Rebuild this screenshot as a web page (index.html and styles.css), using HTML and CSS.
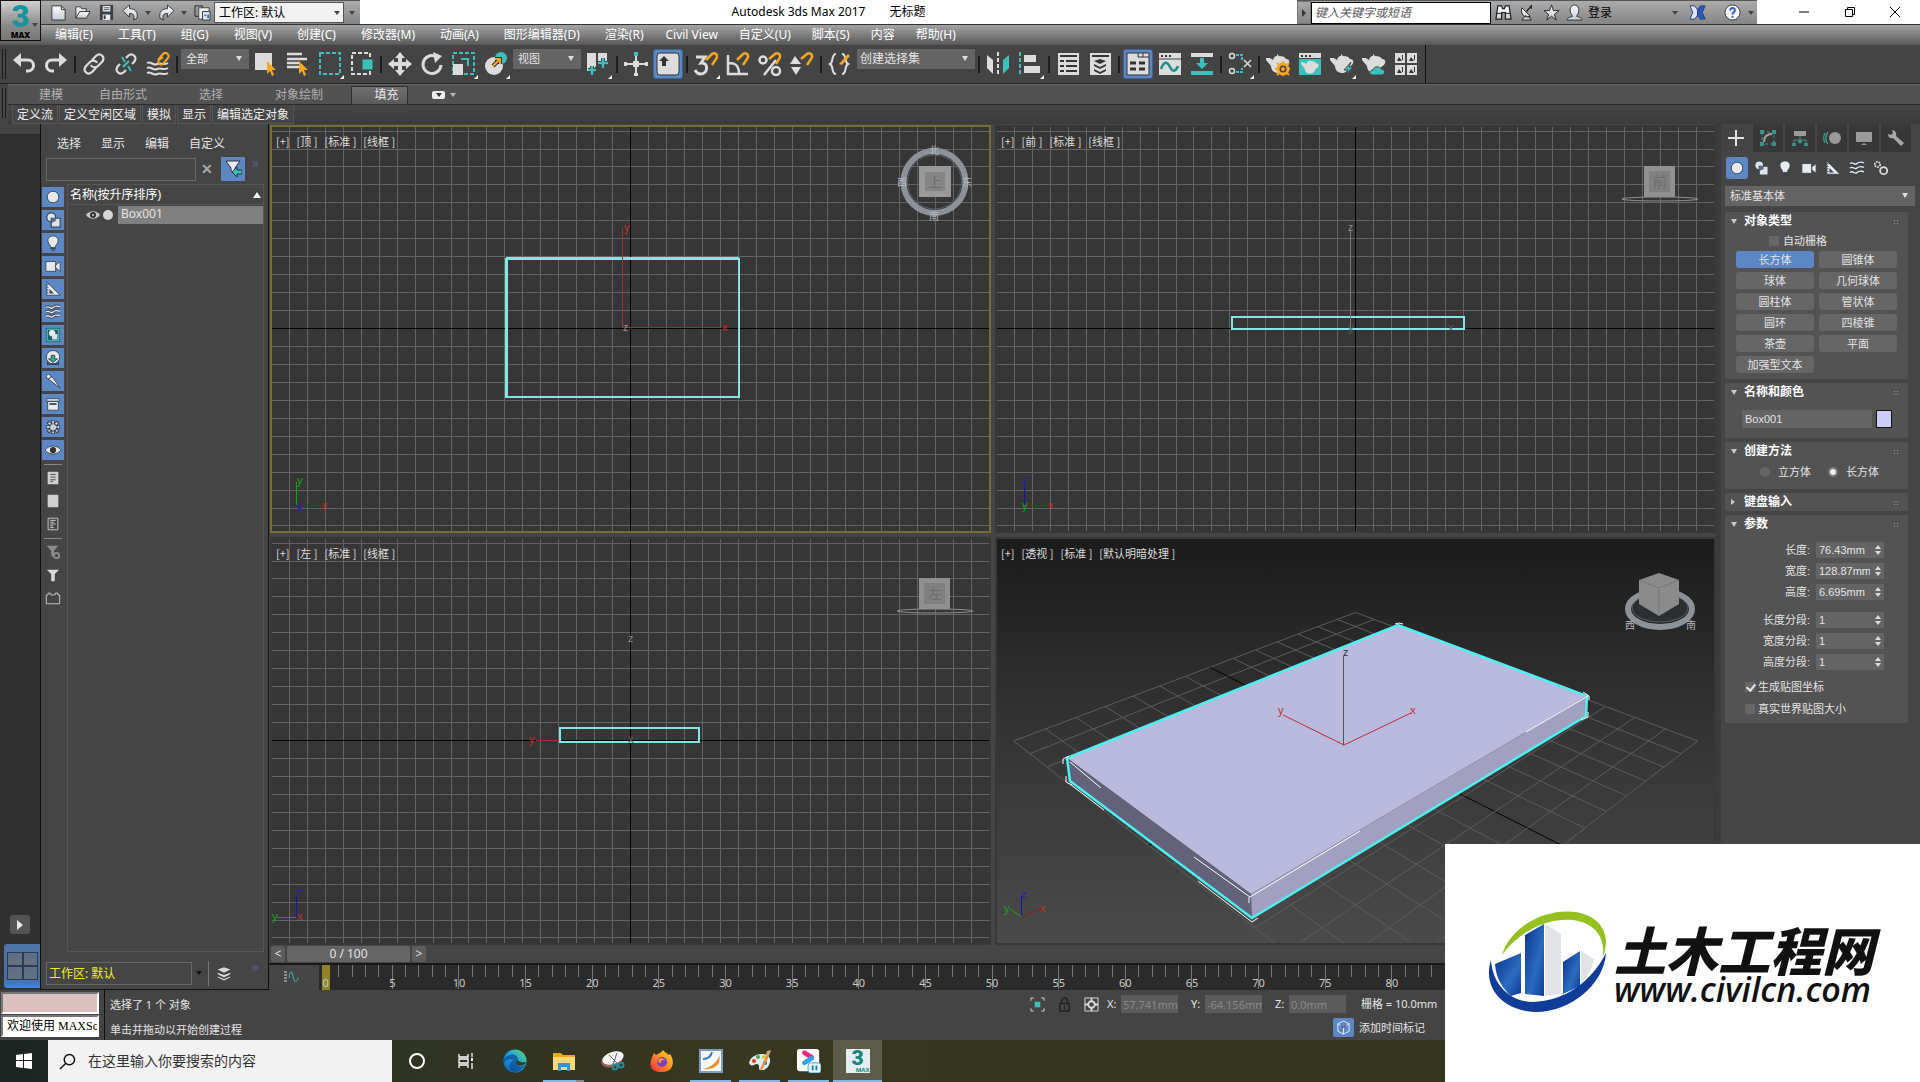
FILE: index.html
```
<!DOCTYPE html>
<html lang="zh-CN">
<head>
<meta charset="UTF-8">
<meta name="viewport" content="width=device-width, initial-scale=1.0">
<title>Autodesk 3ds Max 2017 无标题</title>
<link rel="stylesheet" href="styles.css">
</head>
<body>

<!-- icon sprite -->
<svg class="sprite" aria-hidden="true">
  <defs>
    <linearGradient id="metal" x1="0" y1="0" x2="0" y2="1"><stop offset="0" stop-color="#fff"/><stop offset="1" stop-color="#c4ccd6"/></linearGradient>
    <linearGradient id="vpbg" x1="0" y1="0" x2="0" y2="1"><stop offset="0" stop-color="#1b1b1b"/><stop offset=".5" stop-color="#353535"/><stop offset="1" stop-color="#4a4a4a"/></linearGradient>
    <linearGradient id="bar" x1="0" y1="0" x2="1" y2="1"><stop offset="0" stop-color="#0c318c"/><stop offset=".6" stop-color="#2b6cc0"/><stop offset="1" stop-color="#0f3a96"/></linearGradient>
    <linearGradient id="edge" x1="0" y1="1" x2="1" y2="0"><stop offset="0" stop-color="#0c59a4"/><stop offset=".5" stop-color="#1b9de2"/><stop offset="1" stop-color="#5fdd6a"/></linearGradient>
    <linearGradient id="fox" x1="1" y1="0" x2="0" y2="1"><stop offset="0" stop-color="#ffe23a"/><stop offset=".5" stop-color="#ff8a1f"/><stop offset="1" stop-color="#f5244a"/></linearGradient>
  </defs>

  <!-- quick access -->
  <symbol id="q-new" viewBox="0 0 18 18"><path d="M2 2h10l4 4v11H2z" fill="url(#metal)" stroke="#333"/><path d="M12 2v4h4" fill="none" stroke="#333"/></symbol>
  <symbol id="q-open" viewBox="0 0 18 18"><path d="M2 15V3h5l1 2h5v3" fill="url(#metal)" stroke="#333"/><path d="M2 15l4-7h11l-4 7z" fill="url(#metal)" stroke="#333"/></symbol>
  <symbol id="q-save" viewBox="0 0 18 18"><path d="M2 1h14v16H2z" fill="#3c4048"/><path d="M5 2h8v6H5zM5 11h8v6H5z" fill="#e8ecf0"/><path d="M6 4h6M6 6h6" stroke="#555"/><path d="M6 12h2v4H6z" fill="#333"/></symbol>
  <symbol id="q-undo" viewBox="0 0 18 18"><path d="M1 7l7-6v4c6 0 9 3 8 10l-4 2c2-5 0-7-4-7v4z" fill="url(#metal)" stroke="#333"/></symbol>
  <symbol id="q-redo" viewBox="0 0 18 18"><path d="M17 7l-7-6v4c-6 0-9 3-8 10l4 2c-2-5 0-7 4-7v4z" fill="url(#metal)" stroke="#333"/></symbol>
  <symbol id="q-proj" viewBox="0 0 18 18"><path d="M1 2h8v11H1z" fill="none" stroke="#222"/><path d="M5 4h11v12H5z" fill="#eee" stroke="#444"/><path d="M9 8h8v9H9z" fill="#dfe8f2" stroke="#333"/><path d="M11 11h2v2h-2zM14 11h2v4h-2z" fill="#3a6cc0"/></symbol>

  <!-- info center -->
  <symbol id="i-bino" viewBox="0 0 18 18"><path d="M3 2h4l1 3h2l1-3h4l2 14h-6V9H7v7H1z" fill="url(#metal)" stroke="#222" stroke-width="1.3"/><path d="M1 10h6M11 10h6" stroke="#222"/></symbol>
  <symbol id="i-dish" viewBox="0 0 18 18"><path d="M3 4l9 9c-6 3-11-3-9-9zM7 12l-4 5h10l-3-4" fill="url(#metal)" stroke="#222"/><path d="M8 8l5-6M13 1v4" stroke="#222" stroke-width="1.5"/></symbol>
  <symbol id="i-star" viewBox="0 0 18 18"><path d="M9 1l2 6h6l-5 4 2 6-5-4-5 4 2-6-5-4h6z" fill="url(#metal)" stroke="#222"/></symbol>
  <symbol id="i-user" viewBox="0 0 18 18"><path d="M1 17c0-3 4-3 6-4-5-6-2-12 2-12s7 6 2 12c2 1 6 1 6 4z" fill="url(#metal)" stroke="#333"/></symbol>
  <symbol id="i-x" viewBox="0 0 18 18"><path d="M1 2h5l3 4v6l-3 4H1l3-7z" fill="#dce6f8" stroke="#223c88"/><path d="M17 2h-5L9 6v6l3 4h5l-3-7z" fill="#2f57b8" stroke="#223c88"/></symbol>
  <symbol id="i-help" viewBox="0 0 18 18"><circle cx="9" cy="9" r="8" fill="#f4f6f8" stroke="#333"/><path d="M6.500 7c0-4 5.500-3.500 5 0-.3 2-2.500 2-2.500 4" fill="none" stroke="#2e5aa8" stroke-width="2"/><path d="M8 12.500h2v2H8z" fill="#2e5aa8"/></symbol>

  <!-- main toolbar -->
  <symbol id="t-undo" viewBox="0 0 24 24"><path d="M7 8h9a5 5 0 0 1 0 11h-2" fill="none" stroke="#dcdcdc" stroke-width="3"/><path d="M1 8l8-7v14z" fill="#dcdcdc"/></symbol>
  <symbol id="t-redo" viewBox="0 0 24 24"><path d="M17 8H8a5 5 0 0 0 0 11h2" fill="none" stroke="#dcdcdc" stroke-width="3"/><path d="M23 8l-8-7v14z" fill="#dcdcdc"/></symbol>
  <symbol id="t-link" viewBox="0 0 24 24"><g fill="none" stroke="#dcdcdc" stroke-width="2.200"><path d="M10 8l4-4c4-4 10 1 6 6l-4 4c-2 2-6 2-7-1"/><path d="M14 16l-4 4c-4 4-10-1-6-6l4-4c2-2 6-2 7 1"/></g></symbol>
  <symbol id="t-unlink" viewBox="0 0 24 24"><g fill="none" stroke="#dcdcdc" stroke-width="2.200"><path d="M12 6l2-2c4-4 10 1 6 6l-2 2"/><path d="M12 18l-2 2c-4 4-10-1-6-6l2-2"/></g><path d="M8 5l3 5M14 14l3 5M15 9l-6 6" stroke="#3cc0bd" stroke-width="2"/></symbol>
  <symbol id="t-bind" viewBox="0 0 24 24"><g fill="none" stroke="#dcdcdc" stroke-width="2"><path d="M1 11c4-2 6 3 10 1s6 2 11-1M1 16c4-2 6 3 10 1s6 2 11-1M1 21c4-2 6 3 10 1s6 2 11-1"/></g><path d="M12 8l5-6c3-3 7 1 5 4l-5 6c-3 2-6-1-4-4l4-3" fill="none" stroke="#f5a623" stroke-width="2"/></symbol>
  <symbol id="t-select" viewBox="0 0 24 24"><path d="M1 1h17v17H1z" fill="#dcdcdc"/><path d="M13 9l9 9h-4l2 5-2 1-2-5-3 3z" fill="#f5a623"/></symbol>
  <symbol id="t-byname" viewBox="0 0 24 24"><path d="M1 2h15M1 7h20M1 11h13M1 15h13" stroke="#dcdcdc" stroke-width="2.500"/><path d="M13 9l9 9h-4l2 5-2 1-2-5-3 3z" fill="#f5a623"/></symbol>
  <symbol id="t-rect" viewBox="0 0 24 24"><path d="M2 1h20v21H2z" fill="none" stroke="#3cc0bd" stroke-width="2" stroke-dasharray="4 2"/></symbol>
  <symbol id="t-cross" viewBox="0 0 24 24"><path d="M2 1h18v21H2z" fill="none" stroke="#dcdcdc" stroke-width="2" stroke-dasharray="4 2"/><path d="M12 7h11v11H12z" fill="#3cc0bd" stroke="#454545"/></symbol>
  <symbol id="t-move" viewBox="0 0 24 24"><path d="M12 0l5 6h-3v4h4V7l6 5-6 5v-3h-4v4h3l-5 6-5-6h3v-4H6v3l-6-5 6-5v3h4V6H7z" fill="#dcdcdc"/></symbol>
  <symbol id="t-rotate" viewBox="0 0 24 24"><path d="M15 4a9 9 0 1 0 6 9" fill="none" stroke="#dcdcdc" stroke-width="3"/><path d="M13 0l9 4-7 7z" fill="#dcdcdc"/></symbol>
  <symbol id="t-scale" viewBox="0 0 24 24"><path d="M1 1h21v21H1z" fill="none" stroke="#3cc0bd" stroke-width="2" stroke-dasharray="4 2"/><path d="M1 12h10v11H1z" fill="#dcdcdc"/><path d="M9 7h7v7" fill="none" stroke="#3cc0bd" stroke-width="2"/></symbol>
  <symbol id="t-place" viewBox="0 0 24 24"><circle cx="10" cy="14" r="9" fill="#dcdcdc"/><circle cx="17" cy="6" r="6" fill="#3cc0bd"/><path d="M9 14l7-7m-5 0h5v5" fill="none" stroke="#333" stroke-width="4"/><path d="M9 14l7-7m-5 0h5v5" fill="none" stroke="#f5a623" stroke-width="2"/></symbol>
  <symbol id="t-pivot" viewBox="0 0 24 24"><path d="M1 1h9v13l-4 5H1zM12 1h9v11h-9z" fill="#dcdcdc"/><path d="M6 14v9M2 18h8M17 6v10M12 11h10" stroke="#333" stroke-width="4"/><path d="M6 14v9M2 18h8M17 6v10M12 11h10" stroke="#3cc0bd" stroke-width="2.500"/></symbol>
  <symbol id="t-manip" viewBox="0 0 24 24"><path d="M12 4v19M1 12h22" stroke="#dcdcdc" stroke-width="2"/><path d="M9 9h6v6H9zM0 10h3v4H0zM21 10h3v4h-3zM10 21h4v3h-4z" fill="#dcdcdc"/><path d="M10 0h4v4h-4z" fill="#3cc0bd"/></symbol>
  <symbol id="t-key" viewBox="0 0 24 24"><rect x="1" y="1" width="22" height="22" rx="3" fill="#dcdcdc" stroke="#333"/><path d="M8 4l5 5h-3v5H6V9H3z" fill="#333"/></symbol>
  <symbol id="t-snap3" viewBox="0 0 24 24"><path d="M2 5h9l-4 6c8-1 7 11 0 11-3 0-5-2-6-4" fill="none" stroke="#dcdcdc" stroke-width="3"/><path d="M12 8l6-6c3-2 7 1 4 5l-4 6" fill="none" stroke="#f5a623" stroke-width="2.500"/></symbol>
  <symbol id="t-angle" viewBox="0 0 24 24"><path d="M2 3v19h20M3 11c8 0 10 4 10 11" fill="none" stroke="#dcdcdc" stroke-width="2.500"/><path d="M11 8l6-6c3-2 7 1 4 5l-4 6" fill="none" stroke="#f5a623" stroke-width="2.500"/></symbol>
  <symbol id="t-percent" viewBox="0 0 24 24"><circle cx="5" cy="8" r="3.500" fill="none" stroke="#dcdcdc" stroke-width="2.500"/><circle cx="18" cy="19" r="4" fill="none" stroke="#dcdcdc" stroke-width="2.500"/><path d="M18 8L6 23" stroke="#dcdcdc" stroke-width="2.500"/><path d="M11 7l6-5c3-2 7 1 4 5l-3 5" fill="none" stroke="#f5a623" stroke-width="2.500"/></symbol>
  <symbol id="t-spin" viewBox="0 0 24 24"><path d="M0 12l5-8 6 8zM1 15h10l-5 8z" fill="#dcdcdc"/><path d="M11 7l6-5c3-2 7 1 4 5l-4 6" fill="none" stroke="#f5a623" stroke-width="2.500"/></symbol>
  <symbol id="t-sets" viewBox="0 0 24 24"><path d="M8 2C3 2 6 10 2 12c4 2 1 10 6 10M14 2c5 0 2 8 6 10-4 2-1 10-6 10" fill="none" stroke="#dcdcdc" stroke-width="2"/><path d="M11 12L20 2l2 2-8 9z" fill="#f5a623"/></symbol>
  <symbol id="t-mirror" viewBox="0 0 24 24"><path d="M1 3l6 5v14l-6-6z" fill="#dcdcdc"/><path d="M23 3l-6 5v14l6-6z" fill="#3cc0bd"/><path d="M12 0v24" stroke="#dcdcdc" stroke-width="2" stroke-dasharray="4 2"/></symbol>
  <symbol id="t-align" viewBox="0 0 24 24"><path d="M2 0v24" stroke="#3cc0bd" stroke-width="2" stroke-dasharray="4 2"/><path d="M6 3h12v7H6zM6 14h16v7H6z" fill="#dcdcdc"/></symbol>
  <symbol id="t-table" viewBox="0 0 24 24"><path d="M2 1h21v22H2z" fill="#dcdcdc"/><path d="M4 4h17M4 9h4M10 9h11M4 14h4M10 14h11M4 19h4M10 19h11" stroke="#333" stroke-width="2"/></symbol>
  <symbol id="t-stack" viewBox="0 0 24 24"><path d="M2 1h21v22H2z" fill="#dcdcdc"/><path d="M4 4h17" stroke="#333" stroke-width="2"/><path d="M12 7l6 2-6 3-6-3zM6 12l6 3 6-3v2l-6 3-6-3zM6 17l6 3 6-3v2l-6 3-6-3z" fill="#333"/></symbol>
  <symbol id="t-ribbon" viewBox="0 0 24 24"><path d="M1 1h22v22H1z" fill="#dcdcdc" stroke="#333"/><path d="M12 1v4h11M17 1v4" fill="none" stroke="#333"/><path d="M4 11h6M13 11h6M4 17h6M13 17h6" stroke="#333" stroke-width="3"/></symbol>
  <symbol id="t-curve" viewBox="0 0 24 24"><path d="M1 1h22v22H1z" fill="#dcdcdc"/><path d="M3 3h2v2H3zM7 3h2v2H7zM11 3h2v2h-2z" fill="#333"/><path d="M0 7h24" stroke="#444"/><path d="M3 17c3-8 6-8 9-2s6 4 8-1" fill="none" stroke="#1c8f8d" stroke-width="2.500"/></symbol>
  <symbol id="t-schem" viewBox="0 0 24 24"><path d="M1 1h22v4H1z" fill="#dcdcdc"/><path d="M1 19h22v4H1zM10 6h4v5h4l-6 6-6-6h4z" fill="#3cc0bd"/></symbol>
  <symbol id="t-node" viewBox="0 0 24 24"><g fill="none" stroke="#dcdcdc" stroke-width="1.500"><circle cx="4" cy="4" r="2.500"/><circle cx="4" cy="19" r="2.500"/><path d="M16 8l7 7M23 8l-7 7"/></g><path d="M8 3h6v5M8 20h6v-4" fill="none" stroke="#3cc0bd" stroke-width="2" stroke-dasharray="3 1"/></symbol>
  <symbol id="teapot" viewBox="0 0 24 24"><path d="M11 2l2 2c4 0 6 1 7 3 5 0 4 6-1 8-1 4-4 6-7 6-5 0-7-4-7-7L0 8V6h4l3 2c1-3 2-4 4-4z" fill="#dcdcdc"/></symbol>
  <symbol id="t-rsetup" viewBox="0 0 24 24"><use href="#teapot"/><circle cx="17" cy="17" r="5" fill="#454545" stroke="#f5a623" stroke-width="3"/><path d="M17 9v3M17 22v2M9 17h3M22 17h2M11 11l2 2M21 21l2 2M11 23l2-2M21 13l2-2" stroke="#f5a623" stroke-width="2"/><circle cx="17" cy="17" r="2" fill="#f5a623"/></symbol>
  <symbol id="t-rframe" viewBox="0 0 24 24"><path d="M1 1h22v5H1z" fill="#dcdcdc"/><path d="M3 3h2v2H3zM7 3h2v2H7zM11 3h2v2h-2z" fill="#333"/><path d="M1 7h22v16H1z" fill="#3cc0bd"/><use href="#teapot" x="3" y="6" width="18" height="18"/></symbol>
  <symbol id="t-rprod" viewBox="0 0 24 24"><use href="#teapot"/><path d="M21 10l-7 8h4l-2 5 7-8h-4z" fill="#3cc0bd" stroke="#454545"/></symbol>
  <symbol id="t-rcloud" viewBox="0 0 24 24"><use href="#teapot"/><path d="M10 23c-4-1-2-5 1-5 1-4 7-4 8-1 4 0 5 5 1 6z" fill="#3cc0bd" stroke="#454545"/></symbol>
  <symbol id="t-gal" viewBox="0 0 24 24"><path d="M1 1h10v10H1zM13 1h10v10H13zM1 13h10v10H1zM13 13h10v10H13z" fill="#dcdcdc"/><path d="M3 9l2-4 3 4zM15 9l2-4 3 4zM3 21l2-4 3 4zM15 21l2-4 3 4zM8 3h1v5H8zM20 3h1v5h-1zM8 15h1v5H8zM20 15h1v5h-1z" fill="#333"/></symbol>

  <!-- object categories -->
  <symbol id="c-geo" viewBox="0 0 18 18"><circle cx="9" cy="9" r="6.500" fill="#e4e8ec" stroke="#3b4450"/></symbol>
  <symbol id="c-shape" viewBox="0 0 18 18"><circle cx="7" cy="6" r="5" fill="#dfe4ea" stroke="#3b4450" stroke-width="1.300"/><path d="M7 7h10v10H7z" fill="#dfe4ea" stroke="#3b4450" stroke-width="1.300"/><path d="M7 7h5v3l-4 2z" fill="#5a6a80"/></symbol>
  <symbol id="c-light" viewBox="0 0 18 18"><path d="M6 12C0 5 5 1 9 1s9 4 3 11v2H6z" fill="#e8ebee" stroke="#3b4450"/><path d="M6 15h6M7 17h4" stroke="#3b4450" stroke-width="1.500"/></symbol>
  <symbol id="c-cam" viewBox="0 0 18 18"><path d="M1 4h11v11H1z" fill="#e8ebee" stroke="#3b4450"/><path d="M12 8l5-4v11l-5-4z" fill="#e8ebee" stroke="#3b4450"/></symbol>
  <symbol id="c-help" viewBox="0 0 18 18"><path d="M2 1l15 15H2z" fill="#e8ebee" stroke="#3b4450"/><path d="M5 9l5 5H5z" fill="#3b4450"/><path d="M2 4h2M2 7h2M2 10h2M2 13h2" stroke="#3b4450"/></symbol>
  <symbol id="c-warp" viewBox="0 0 18 18"><path d="M1 4c4-3 5 3 8 0s5-1 8-1M1 9c4-3 5 3 8 0s5-1 8-1M1 14c4-3 5 3 8 0s5-1 8-1" fill="none" stroke="#3b4450" stroke-width="3.500"/><path d="M1 4c4-3 5 3 8 0s5-1 8-1M1 9c4-3 5 3 8 0s5-1 8-1M1 14c4-3 5 3 8 0s5-1 8-1" fill="none" stroke="#e4e8ec" stroke-width="1.500"/></symbol>
  <symbol id="c-group" viewBox="0 0 18 18"><path d="M1 1h16v16H1z" fill="#1f5f68"/><path d="M2.500 2.500h13v13h-13z" fill="none" stroke="#5fe0c8"/><circle cx="8" cy="7" r="3.500" fill="#e8ebee"/><path d="M8 8h6v6H8z" fill="#dce6ea"/></symbol>
  <symbol id="c-xref" viewBox="0 0 18 18"><circle cx="9" cy="8" r="7.500" fill="#e4e8ec" stroke="#3b4450"/><path d="M7 6h4v4h3l-5 4-5-4h3z" fill="#2fae8c" stroke="#2b4450"/><path d="M3 13v3h12v-3" fill="none" stroke="#2b4450" stroke-width="1.500"/></symbol>
  <symbol id="c-bone" viewBox="0 0 18 18"><circle cx="4" cy="4" r="2.500" fill="#e8ebee" stroke="#3b4450"/><path d="M4 7l4-3 9 13z" fill="#e8ebee" stroke="#3b4450"/></symbol>
  <symbol id="c-cont" viewBox="0 0 18 18"><path d="M2 3h14v3H2zM3 6h12v10H3z" fill="#e8ebee" stroke="#3b4450"/><path d="M5 9h8" stroke="#3b4450" stroke-width="2"/></symbol>
  <symbol id="c-frozen" viewBox="0 0 18 18"><path d="M9 1v16M1 9h16M3 3l12 12M15 3L3 15" stroke="#3b4450" stroke-width="4"/><path d="M9 2v14M2 9h14M4 4l10 10M14 4L4 14" stroke="#cfd6dd" stroke-width="2" stroke-dasharray="3 1"/></symbol>
  <symbol id="c-eye" viewBox="0 0 18 18"><path d="M0 9c5-6 13-6 18 0-5 6-13 6-18 0z" fill="#e4e8ec" stroke="#3b4450"/><circle cx="9" cy="9" r="3.500" fill="#333"/></symbol>
  <symbol id="e-all" viewBox="0 0 18 18"><path d="M3 2h12v14H3z" fill="#d0d0d0"/><path d="M6 5h6M6 8h6M6 11h6M6 13h3" stroke="#444"/></symbol>
  <symbol id="e-none" viewBox="0 0 18 18"><path d="M3 2h12v14H3z" fill="#d0d0d0"/></symbol>
  <symbol id="e-inv" viewBox="0 0 18 18"><path d="M3.500 2.500h11v13h-11z" fill="none" stroke="#d0d0d0"/><path d="M6 5h6M6 7h4M6 9h6M6 11h3M6 13h4" stroke="#d0d0d0"/></symbol>
  <symbol id="e-fgear" viewBox="0 0 18 18"><path d="M2 2h13l-5 6v7l-3-2V8z" fill="#8c8c8c"/><circle cx="13" cy="13" r="3" fill="none" stroke="#8c8c8c" stroke-width="2"/></symbol>
  <symbol id="e-filter" viewBox="0 0 18 18"><path d="M2 3h14l-5 5v8H7V8z" fill="#d8d8d8"/></symbol>
  <symbol id="e-lego" viewBox="0 0 18 18"><path d="M1.500 5.500h2v-2h3v2h5v-2h3v2h2v10h-15z" fill="none" stroke="#d0d0d0"/></symbol>
  <symbol id="e-find" viewBox="0 0 18 18"><path d="M2 1h14l-5 7v6l-4-3V8z" fill="#e8ebee" stroke="#333"/><path d="M18 10h-5V7l-5 5 5 5v-3h5z" fill="#3cc0bd" stroke="#234"/></symbol>
  <symbol id="e-layers" viewBox="0 0 18 18"><path d="M9 1l8 3-8 4-8-4zM1 8l8 3 8-3v2l-8 4-8-4zM1 13l8 3 8-3v1l-8 4-8-4z" fill="#d8d8d8"/></symbol>
  <symbol id="vis" viewBox="0 0 14 10"><path d="M0 5c4-5 10-5 14 0-4 5-10 5-14 0z" fill="#c8c8c8"/><circle cx="7" cy="5" r="3" fill="#333"/><circle cx="7" cy="5" r="1" fill="#ccc"/></symbol>

  <!-- command panel -->
  <symbol id="p-create" viewBox="0 0 18 18"><path d="M9 1v16M1 9h16" stroke="#e4e4e4" stroke-width="2"/></symbol>
  <symbol id="p-modify" viewBox="0 0 18 18"><path d="M3 3h12v12H3z" fill="none" stroke="#3f9186" stroke-dasharray="3 2"/><path d="M1 1h4v4H1zM13 1h4v4h-4zM1 13h4v4H1zM13 13h4v4h-4z" fill="#3f9186"/><path d="M5 13c0-5 3-8 8-8" fill="none" stroke="#a0a0a0" stroke-width="2"/></symbol>
  <symbol id="p-hier" viewBox="0 0 18 18"><path d="M3 2h12v5H3z" fill="#9a9a9a"/><path d="M9 7v4M3 15v-4h12v4" fill="none" stroke="#3f9186"/><path d="M1 14h4v3H1zM7 11h4v3H7zM13 14h4v3h-4z" fill="#3f9186"/></symbol>
  <symbol id="p-motion" viewBox="0 0 18 18"><circle cx="12" cy="9" r="6" fill="#9a9a9a"/><path d="M5 3c-3 4-3 8 0 12M2 4c-2 4-2 6 0 10" fill="none" stroke="#3f9186" stroke-width="1.500"/></symbol>
  <symbol id="p-disp" viewBox="0 0 18 18"><path d="M1 3h16v10H1zM6 16l3-2 3 2z" fill="#9a9a9a"/></symbol>
  <symbol id="p-util" viewBox="0 0 18 18"><path d="M5 1l1 3-2 2-3-1c0 4 3 5 5 4l8 8 3-3-8-7c1-3-1-6-4-6z" fill="#a8a8a8"/></symbol>
  <symbol id="p-sys" viewBox="0 0 18 18"><circle cx="5" cy="5" r="3" fill="none" stroke="#ddd" stroke-width="2" stroke-dasharray="2 1"/><circle cx="12" cy="12" r="4" fill="none" stroke="#ddd" stroke-width="2"/></symbol>

  <!-- status -->
  <symbol id="s-iso" viewBox="0 0 16 16"><path d="M1 4V1h3M12 1h3v3M15 12v3h-3M4 15H1v-3" fill="none" stroke="#ddd"/><path d="M5 5h6v6H5z" fill="#3cc0bd"/></symbol>
  <symbol id="s-lock" viewBox="0 0 16 16"><path d="M3 7h10v8H3zM5 7V4c0-4 6-4 6 0v3" fill="none" stroke="#222" stroke-width="1.500"/><path d="M8 9v4" stroke="#222"/></symbol>
  <symbol id="s-xform" viewBox="0 0 16 16"><path d="M1 1h14v14H1z" fill="none" stroke="#ddd"/><path d="M8 1v14M1 8h14" stroke="#ddd" stroke-width="2"/><circle cx="8" cy="8" r="3.500" fill="#444" stroke="#ddd" stroke-width="2"/></symbol>
  <symbol id="s-tag" viewBox="0 0 16 16"><path d="M8 1l6 3v8l-6 3-6-3V4zM2 4l6 4 6-4M8 8v7" fill="none" stroke="#e8eef6"/><path d="M5 6l3 2 3-2" stroke="#222" fill="none"/></symbol>
  <symbol id="s-curve" viewBox="0 0 16 16"><path d="M1 3h3M1 6h3M1 9h3M1 12h3" stroke="#ddd"/><path d="M6 9c1-8 3-8 4-2s3 8 5 2" fill="none" stroke="#3cc0bd"/></symbol>

  <!-- view navigation -->
  <symbol id="cube-face" viewBox="0 0 80 40"><ellipse cx="40" cy="36" rx="38" ry="2" fill="none" stroke="#8d8f91"/><path d="M24 3h31v31H24z" fill="#909090"/><path d="M29 8h21v21H29z" fill="#808080"/></symbol>

  <!-- taskbar -->
  <symbol id="w-start" viewBox="0 0 16 16"><path d="M0 2l7-1v6H0zM8 1l8-1v7H8zM0 8h7v7l-7-1zM8 8h8v8l-8-1z" fill="#fff"/></symbol>
  <symbol id="w-search" viewBox="0 0 18 18"><circle cx="11" cy="7" r="5.500" fill="none" stroke="#111" stroke-width="1.500"/><path d="M7 11l-6 6" stroke="#111" stroke-width="1.500"/></symbol>
  <symbol id="w-cortana" viewBox="0 0 24 24"><circle cx="12" cy="12" r="7" fill="none" stroke="#fff" stroke-width="2"/></symbol>
  <symbol id="w-view" viewBox="0 0 24 24"><path d="M5 5v3h9V5M5 19v-3h9v3M5 10h9v4H5zM18 4v4M18 14v6" fill="none" stroke="#fff" stroke-width="1.300"/><path d="M17 9h2v3h-2z" fill="#fff"/></symbol>
  <symbol id="w-edge" viewBox="0 0 24 24"><circle cx="12" cy="12" r="11.500" fill="url(#edge)"/><path d="M1 10C5 4 15 4 15 11c0 3-3 3-1 5 3 2 8 1 9-2-2 6-7 9-11 9-8 0-7-10-1-12-5-2-9 0-10 3z" fill="#0b4f95" fill-opacity=".75"/><path d="M14 10c1 1 0 3-1 4 0 3 6 3 9 1l1-2c-3 1-8 0-9-3z" fill="#37361f"/></symbol>
  <symbol id="w-folder" viewBox="0 0 24 24"><path d="M1 4h8l2 2h12v15H1z" fill="#e8a91d"/><path d="M1 8h22v13H1z" fill="#ffd873"/><path d="M6 14h12v8h-3v-4H9v4H6z" fill="#3391d4"/></symbol>
  <symbol id="w-snip" viewBox="0 0 24 24"><ellipse cx="11" cy="11" rx="11" ry="7" fill="#a05a5a" transform="rotate(-20 11 11)"/><ellipse cx="12" cy="9" rx="11" ry="6" fill="#f4f4f4" transform="rotate(-18 12 9)"/><path d="M8 6l10 10M16 4l-4 12" stroke="#667"/><circle cx="14" cy="18" r="2.500" fill="none" stroke="#2a8a9a" stroke-width="2"/><circle cx="20" cy="16" r="2.500" fill="none" stroke="#2a8a9a" stroke-width="2"/></symbol>
  <symbol id="w-fox" viewBox="0 0 24 24"><path d="M2 8l2-4 2 2c3-2 4-1 7-5 2 3 5 3 5 5l2-1c5 7 4 18-8 18S-1 16 2 8z" fill="url(#fox)"/><circle cx="12" cy="13" r="5" fill="#7542c8"/><path d="M8 11c2-3 6-2 7 1-2-2-4-1-4 1s-3 1-3-2z" fill="#ff9a24"/></symbol>
  <symbol id="w-xyz" viewBox="0 0 24 24"><path d="M0 0h24v24H0z" fill="#7f9cc8"/><path d="M2 2h20v20H2z" fill="#f8fafc"/><path d="M4 10c5 0 8-3 9-7" fill="none" stroke="#3777c2" stroke-width="2"/><path d="M3 20c9-1 15-7 18-14l-1 8c-4 5-9 7-17 6z" fill="#f08a1c"/></symbol>
  <symbol id="w-paint" viewBox="0 0 24 24"><path d="M1 14C3 4 20 2 22 10c1 7-5 12-9 11-4 0 0-5-4-6-3 0-5 4-8-1z" fill="#dbeaf5"/><circle cx="6" cy="12" r="2" fill="#d8402f"/><circle cx="10" cy="8" r="2" fill="#4aa84a"/><circle cx="16" cy="8" r="2" fill="#e8c52d"/><circle cx="17" cy="14" r="2" fill="#2c68c8"/><path d="M12 20l7-14 2 1-7 14z" fill="#e2902a"/><path d="M18 6l1-4 4-1-2 6z" fill="#c8a878"/></symbol>
  <symbol id="w-youku" viewBox="0 0 26 26"><rect width="24" height="24" rx="3" fill="#fff"/><path d="M8 4l8 5" stroke="#f0287a" stroke-width="5" stroke-linecap="round"/><path d="M16 10l-8 5" stroke="#2fa4f0" stroke-width="5" stroke-linecap="round"/><rect x="12" y="15" width="14" height="11" rx="3" fill="#e6f4fc" stroke="#39a0d8"/><path d="M17 18v5M21 18v5" stroke="#1f7eb8" stroke-width="2"/></symbol>
</svg>

<header class="titlebar">
  <div class="quickbar">
    <button class="qbtn"><svg><use href="#q-new"/></svg></button>
    <button class="qbtn"><svg><use href="#q-open"/></svg></button>
    <button class="qbtn"><svg><use href="#q-save"/></svg></button>
    <button class="qbtn"><svg><use href="#q-undo"/></svg></button>
    <i class="caret"></i>
    <button class="qbtn"><svg><use href="#q-redo"/></svg></button>
    <i class="caret"></i>
    <button class="qbtn"><svg><use href="#q-proj"/></svg></button>
    <span class="workspace"><select aria-label="工作区"><option>工作区: 默认</option></select><i class="caret"></i></span>
    <i class="caret overflow"></i>
  </div>
  <h1><span>Autodesk 3ds Max 2017</span><span>无标题</span></h1>
  <div class="infocenter">
    <button class="expand"></button>
    <input class="help-search" type="text" placeholder="键入关键字或短语" aria-label="搜索帮助">
    <button class="qbtn"><svg><use href="#i-bino"/></svg></button>
    <button class="qbtn"><svg><use href="#i-dish"/></svg></button>
    <button class="qbtn"><svg><use href="#i-star"/></svg></button>
    <button class="login"><svg><use href="#i-user"/></svg>登录<i class="caret"></i></button>
    <button class="qbtn exch"><svg><use href="#i-x"/></svg></button>
    <button class="qbtn help"><svg><use href="#i-help"/></svg></button>
    <i class="caret"></i>
  </div>
  <div class="winbtns">
    <button><svg viewBox="0 0 12 12"><path d="M1 6h10" stroke="#000"/></svg></button>
    <button><svg viewBox="0 0 12 12"><path d="M1.500 3.500h7v7h-7zM3.500 3V1.500h7v7H9" fill="none" stroke="#000"/></svg></button>
    <button><svg viewBox="0 0 12 12"><path d="M1 1l10 10M11 1L1 11" stroke="#000"/></svg></button>
  </div>
  <button class="appmenu"><b>3</b><small>MAX</small><i class="caret"></i></button>
</header>

<nav class="menubar">
  <div class="menus">
    <a href="#">编辑(E)</a><a href="#">工具(T)</a><a href="#">组(G)</a><a href="#">视图(V)</a><a href="#">创建(C)</a><a href="#">修改器(M)</a><a href="#">动画(A)</a><a href="#">图形编辑器(D)</a><a href="#">渲染(R)</a>
  </div>
  <div class="menus tight">
    <a href="#">Civil View</a><a href="#">自定义(U)</a><a href="#">脚本(S)</a><a href="#">内容</a><a href="#">帮助(H)</a>
  </div>
</nav>

<div class="toolbar">
  <div class="tools">
    <i class="grip"></i>
    <button><svg><use href="#t-undo"/></svg></button>
    <button><svg><use href="#t-redo"/></svg></button>
    <i class="sep"></i>
    <button><svg><use href="#t-link"/></svg></button>
    <button><svg><use href="#t-unlink"/></svg></button>
    <button><svg><use href="#t-bind"/></svg></button>
    <i class="sep"></i>
    <span class="drop"><select aria-label="选择过滤器"><option>全部</option></select></span>
    <button><svg><use href="#t-select"/></svg></button>
    <button><svg><use href="#t-byname"/></svg></button>
    <button class="fly"><svg><use href="#t-rect"/></svg></button>
    <button><svg><use href="#t-cross"/></svg></button>
    <i class="sep"></i>
    <button><svg><use href="#t-move"/></svg></button>
    <button><svg><use href="#t-rotate"/></svg></button>
    <button class="fly"><svg><use href="#t-scale"/></svg></button>
    <button class="fly"><svg><use href="#t-place"/></svg></button>
    <span class="drop"><select aria-label="参考坐标系"><option>视图</option></select></span>
    <button class="fly"><svg><use href="#t-pivot"/></svg></button>
    <i class="sep"></i>
    <button><svg><use href="#t-manip"/></svg></button>
    <button class="on"><svg><use href="#t-key"/></svg></button>
    <i class="sep"></i>
    <button class="fly"><svg><use href="#t-snap3"/></svg></button>
    <button><svg><use href="#t-angle"/></svg></button>
    <button><svg><use href="#t-percent"/></svg></button>
    <button><svg><use href="#t-spin"/></svg></button>
    <i class="sep"></i>
    <button><svg><use href="#t-sets"/></svg></button>
    <span class="drop wide"><select aria-label="选择集"><option>创建选择集</option></select></span>
    <i class="sep"></i>
    <button><svg><use href="#t-mirror"/></svg></button>
    <button class="fly"><svg><use href="#t-align"/></svg></button>
    <i class="sep"></i>
    <button><svg><use href="#t-table"/></svg></button>
    <button><svg><use href="#t-stack"/></svg></button>
    <i class="sep"></i>
    <button class="on"><svg><use href="#t-ribbon"/></svg></button>
    <button><svg><use href="#t-curve"/></svg></button>
    <button><svg><use href="#t-schem"/></svg></button>
    <i class="sep"></i>
    <button class="fly"><svg><use href="#t-node"/></svg></button>
    <i class="sep"></i>
    <button><svg><use href="#t-rsetup"/></svg></button>
    <button><svg><use href="#t-rframe"/></svg></button>
    <button class="fly"><svg><use href="#t-rprod"/></svg></button>
    <button><svg><use href="#t-rcloud"/></svg></button>
    <button><svg><use href="#t-gal"/></svg></button>
  </div>
</div>

<div class="ribbon">
  <i class="grip"></i>
  <div class="ribbon-body">
    <div class="tabs">
      <button class="model">建模</button><button>自由形式</button><button class="select">选择</button><button>对象绘制</button><button class="active">填充</button>
      <i class="ribbon-toggle"></i><i class="caret"></i>
    </div>
    <div class="panels">
      <button>定义流</button><button>定义空闲区域</button><button>模拟</button><button>显示</button><button>编辑选定对象</button>
    </div>
  </div>
</div>

<main class="workspace-area">
  <aside class="layout-strip">
    <button class="play"></button>
    <button class="layout"><i></i><i></i><i></i><i></i></button>
  </aside>

  <section class="explorer">
    <nav class="ex-menu"><a href="#">选择</a><a href="#">显示</a><a href="#">编辑</a><a href="#">自定义</a></nav>
    <div class="ex-search">
      <input type="text" aria-label="查找">
      <button class="clear">✕</button>
      <button class="find"><svg><use href="#e-find"/></svg></button>
      <span class="more">»</span>
    </div>
    <div class="ex-body">
      <div class="ex-filters">
        <button class="on"><svg><use href="#c-geo"/></svg></button>
        <button class="on"><svg><use href="#c-shape"/></svg></button>
        <button class="on"><svg><use href="#c-light"/></svg></button>
        <button class="on"><svg><use href="#c-cam"/></svg></button>
        <button class="on"><svg><use href="#c-help"/></svg></button>
        <button class="on"><svg><use href="#c-warp"/></svg></button>
        <button class="on"><svg><use href="#c-group"/></svg></button>
        <button class="on"><svg><use href="#c-xref"/></svg></button>
        <button class="on"><svg><use href="#c-bone"/></svg></button>
        <button class="on"><svg><use href="#c-cont"/></svg></button>
        <button class="on"><svg><use href="#c-frozen"/></svg></button>
        <button class="on"><svg><use href="#c-eye"/></svg></button>
        <hr>
        <button><svg><use href="#e-all"/></svg></button>
        <button><svg><use href="#e-none"/></svg></button>
        <button><svg><use href="#e-inv"/></svg></button>
        <hr>
        <button><svg><use href="#e-fgear"/></svg></button>
        <button><svg><use href="#e-filter"/></svg></button>
        <button><svg><use href="#e-lego"/></svg></button>
      </div>
      <div class="ex-list">
        <div class="ex-head">名称(按升序排序)<i></i></div>
        <div class="ex-row"><svg class="eye"><use href="#vis"/></svg><i class="dot"></i><span>Box001</span></div>
      </div>
    </div>
    <div class="ex-foot">
      <input type="text" value="工作区: 默认" aria-label="工作区">
      <i class="caret"></i>
      <i class="line"></i>
      <svg class="layers"><use href="#e-layers"/></svg>
      <span class="more">»</span>
    </div>
  </section>

  <section class="center">
    <div class="viewports">
      <div class="viewport active">
        <svg viewBox="270 125 721 408" preserveAspectRatio="xMidYMid slice">
          <g class="grid" data-left="270" data-top="125" data-x="630" data-y="328"></g>
          <path class="red" d="M622.500 327V228M622.500 327.500H722"/>
          <path class="wire" d="M506 259H739V397H506z"/><path class="wire" d="M507 396V258H739"/>
          <path class="red" d="M622.500 262V228"/>
          <path class="green" d="M296.500 505V482"/><path class="darkred" d="M300 505.500H324"/>
          <g class="axis"><text x="624" y="231" class="r">y</text><text x="722" y="331" class="r">x</text><text x="623" y="331" class="k">z</text><text x="297" y="484" class="g">y</text><text x="297" y="509" class="b">z</text><text x="322" y="509" class="r">x</text></g>
          <circle cx="934.500" cy="182" r="31" class="ring"/><circle cx="934.500" cy="182" r="27" fill="none" stroke="#55616a"/>
          <path d="M919 166h32v31h-32z" fill="#999"/><path d="M925 172h20v19h-20z" fill="#858585"/>
          <g class="compass"><text x="929" y="154">北</text><text x="929" y="220">南</text><text x="897" y="186">西</text><text x="962" y="186">东</text><text x="928" y="187" class="face">上</text></g>
        </svg>
        <div class="vp-label"><span>[+]</span><span>[顶 ]</span><span>[标准 ]</span><span>[线框 ]</span></div>
      </div>

      <div class="viewport">
        <svg viewBox="995 125 721 408" preserveAspectRatio="xMidYMid slice">
          <g class="grid" data-left="995" data-top="125" data-x="1355" data-y="328"></g>
          <path class="wire" d="M1232 317H1464V329H1232z"/>
          <path class="gray" d="M1350.500 328V230"/>
          <path class="green" d="M1023 505.500h2"/><path class="blue" d="M1024.500 505V483"/><path class="darkred" d="M1027 505.500H1050"/>
          <g class="axis"><text x="1348" y="231" class="k">z</text><text x="1348" y="331" class="f">y</text><text x="1448" y="331" class="f">x</text><text x="1022" y="484" class="b">z</text><text x="1022" y="509" class="g">y</text><text x="1048" y="509" class="r">x</text></g>
          <use href="#cube-face" x="1620" y="163" width="80" height="40"/>
          <g class="compass"><text x="1653" y="187" class="face">前</text></g>
        </svg>
        <div class="vp-label"><span>[+]</span><span>[前 ]</span><span>[标准 ]</span><span>[线框 ]</span></div>
      </div>

      <div class="viewport">
        <svg viewBox="270 537 721 408" preserveAspectRatio="xMidYMid slice">
          <g class="grid" data-left="270" data-top="537" data-x="630" data-y="740"></g>
          <path class="red" d="M536 740.500H560"/>
          <path class="wire" d="M560 728H699V742H560z"/>
          <path class="blue" d="M296.500 917V895"/><path class="green" d="M277 917.500H296"/>
          <g class="axis"><text x="628" y="642" class="k">z</text><text x="529" y="743" class="r">y</text><text x="628" y="743" class="f">x</text><text x="297" y="896" class="b">z</text><text x="272" y="920" class="g">y</text><text x="297" y="920" class="r">x</text></g>
          <use href="#cube-face" x="895" y="575" width="80" height="40"/>
          <g class="compass"><text x="928" y="599" class="face">左</text></g>
        </svg>
        <div class="vp-label"><span>[+]</span><span>[左 ]</span><span>[标准 ]</span><span>[线框 ]</span></div>
      </div>

      <div class="viewport">
        <svg viewBox="995 537 721 408" preserveAspectRatio="xMidYMid slice">
          <rect x="995" y="537" width="721" height="408" fill="url(#vpbg)"/>
          <g id="perspGrid"></g>
          <path d="M1067 758L1398 625L1587 696L1251 894z" fill="#babadc"/>
          <path d="M1067 758L1251 894L1252 918L1070 781z" fill="#62627a"/>
          <path d="M1251 894L1587 696L1586 716L1252 918z" fill="#a1a1bf"/>
          <path d="M1067 758L1398 625L1587 696L1586 716L1252 918L1070 781z" fill="none" stroke="#4ef0f2" stroke-width="2.500"/>
          <path class="white" d="M1063 764v-5l6-3M1070 762L1101 788M1066 776v6l6 3M1070 784l34 26M1194 857l56 40l110-66M1249 897v6M1198 881l54 41l6-4M1395 624l4-1l4 1M1526 732l62-36M1583 692l6 4v4M1588 712v5l-7 3"/>
          <path d="M1343.500 745V656" stroke="#555"/>
          <path d="M1283 715l61 30l67-32" fill="none" stroke="#c02848"/>
          <path class="blue" d="M1021.500 917V896"/><path class="green" d="M1022 917l-12-8"/><path class="darkred" d="M1022 917l20-9"/>
          <g class="axis"><text x="1343" y="656" class="d">z</text><text x="1278" y="714" class="r">y</text><text x="1410" y="714" class="r">x</text><text x="1021" y="898" class="b">z</text><text x="1004" y="912" class="g">y</text><text x="1040" y="912" class="r">x</text></g>
          <ellipse cx="1660" cy="609" rx="32" ry="18" class="ring"/><ellipse cx="1660" cy="608" rx="28" ry="14" fill="#2c2f32" stroke="#55616a"/>
          <path d="M1639 580l20-7l20 7v24l-20 12l-20-12z" fill="#8b8b8b"/><path d="M1639 580l20 8l20-8M1659 588v28" fill="none" stroke="#777"/>
          <g class="compass"><text x="1625" y="629">西</text><text x="1686" y="629">南</text></g>
        </svg>
        <div class="vp-label"><span>[+]</span><span>[透视 ]</span><span>[标准 ]</span><span>[默认明暗处理 ]</span></div>
      </div>
    </div>
    <div class="timeslider"><button>&lt;</button><button class="thumb">0 / 100</button><button>&gt;</button></div>
    <div class="trackbar">
      <button class="mini-curve"><svg><use href="#s-curve"/></svg></button>
      <div class="track" id="track"></div>
    </div>
  </section>

  <aside class="command">
    <div class="cmd-tabs">
      <button class="active"><svg><use href="#p-create"/></svg></button>
      <button><svg><use href="#p-modify"/></svg></button>
      <button><svg><use href="#p-hier"/></svg></button>
      <button><svg><use href="#p-motion"/></svg></button>
      <button><svg><use href="#p-disp"/></svg></button>
      <button><svg><use href="#p-util"/></svg></button>
    </div>
    <div class="cmd-cats">
      <button class="on"><svg><use href="#c-geo"/></svg></button>
      <button><svg><use href="#c-shape"/></svg></button>
      <button><svg><use href="#c-light"/></svg></button>
      <button><svg><use href="#c-cam"/></svg></button>
      <button><svg><use href="#c-help"/></svg></button>
      <button><svg><use href="#c-warp"/></svg></button>
      <button><svg><use href="#p-sys"/></svg></button>
    </div>
    <span class="drop cmd-drop"><select aria-label="对象类别"><option>标准基本体</option></select></span>

    <div class="rollouts">
      <section class="rollout">
        <h2>对象类型</h2>
        <div class="autogrid"><input type="checkbox" id="autogrid"><label for="autogrid">自动栅格</label></div>
        <div class="types">
          <button class="on">长方体</button><button>圆锥体</button>
          <button>球体</button><button>几何球体</button>
          <button>圆柱体</button><button>管状体</button>
          <button>圆环</button><button>四棱锥</button>
          <button>茶壶</button><button>平面</button>
          <button>加强型文本</button>
        </div>
      </section>
      <section class="rollout">
        <h2>名称和颜色</h2>
        <div class="namecolor"><input type="text" value="Box001" aria-label="名称"><button class="swatch" aria-label="颜色"></button></div>
      </section>
      <section class="rollout">
        <h2>创建方法</h2>
        <div class="methods">
          <input type="radio" name="method" id="m-cube"><label for="m-cube">立方体</label>
          <input type="radio" name="method" id="m-box" checked><label for="m-box">长方体</label>
        </div>
      </section>
      <section class="rollout closed"><h2>键盘输入</h2></section>
      <section class="rollout params">
        <h2>参数</h2>
        <div class="field"><label for="len">长度:</label><span class="spin"><input type="text" id="len" value="76.43mm"></span></div>
        <div class="field"><label for="wid">宽度:</label><span class="spin"><input type="text" id="wid" value="128.87mm"></span></div>
        <div class="field"><label for="hei">高度:</label><span class="spin"><input type="text" id="hei" value="6.695mm"></span></div>
        <div class="field first"><label for="lseg">长度分段:</label><span class="spin"><input type="text" id="lseg" value="1"></span></div>
        <div class="field"><label for="wseg">宽度分段:</label><span class="spin"><input type="text" id="wseg" value="1"></span></div>
        <div class="field"><label for="hseg">高度分段:</label><span class="spin"><input type="text" id="hseg" value="1"></span></div>
        <div class="check"><input type="checkbox" id="mapc" checked><label for="mapc">生成贴图坐标</label></div>
        <div class="check"><input type="checkbox" id="realw"><label for="realw">真实世界贴图大小</label></div>
      </section>
    </div>
  </aside>
</main>

<footer class="status">
  <div class="listener"><div class="macro"></div><div class="script">欢迎使用 MAXScr</div></div>
  <div class="prompt"><p>选择了 1 个 对象</p><p>单击并拖动以开始创建过程</p></div>
  <div class="coords">
    <div class="coord-row">
      <button><svg><use href="#s-iso"/></svg></button>
      <button><svg><use href="#s-lock"/></svg></button>
      <button><svg><use href="#s-xform"/></svg></button>
      <label for="cx">X:</label><input type="text" id="cx" value="57.741mm" disabled>
      <label for="cy">Y:</label><input type="text" id="cy" value="-64.156mm" disabled>
      <label for="cz">Z:</label><input type="text" id="cz" value="0.0mm" disabled>
      <span>栅格 = 10.0mm</span>
    </div>
    <div class="tag-row"><button class="on"><svg><use href="#s-tag"/></svg></button><span>添加时间标记</span></div>
  </div>
</footer>

<div class="taskbar">
  <button class="start"><svg><use href="#w-start"/></svg></button>
  <label class="task-search"><svg><use href="#w-search"/></svg><input type="text" placeholder="在这里输入你要搜索的内容"></label>
  <button><svg><use href="#w-cortana"/></svg></button>
  <button><svg><use href="#w-view"/></svg></button>
  <button><svg><use href="#w-edge"/></svg></button>
  <button class="open multi"><svg><use href="#w-folder"/></svg></button>
  <button><svg><use href="#w-snip"/></svg></button>
  <button><svg><use href="#w-fox"/></svg></button>
  <button class="open"><svg><use href="#w-xyz"/></svg></button>
  <button class="open"><svg><use href="#w-paint"/></svg></button>
  <button class="open"><svg><use href="#w-youku"/></svg></button>
  <button class="open current"><span class="max-icon"><b>3</b><small>MAX</small></span></button>
</div>

<!-- site mark over the corner of the desktop -->
<div class="sitemark">
  <svg class="mark" viewBox="0 0 126 106">
    <path d="M14 47C22 20 55 0 88 4c24 4 36 22 27 45c2-20-8-34-30-37C58 9 30 25 14 47z" fill="#94c11f"/>
    <path d="M7 56l26-11v40l-10 3c-9-8-15-18-16-32z" fill="url(#bar)"/>
    <path d="M37 27l19-11v72l-19-2z" fill="url(#bar)"/><path d="M57 16l16 10v60l-16 2z" fill="#e1e3e6"/>
    <path d="M75 54l17-11v35l-17 8z" fill="url(#bar)"/><path d="M93 43l13 8c-2 10-7 18-13 25z" fill="#e1e3e6"/>
    <path d="M3 52C4 74 20 94 45 94c32-1 58-20 73-49c-2 32-36 59-70 59C15 103-6 80 3 52z" fill="#0f3d97"/>
  </svg>
  <div class="mark-text"><strong>土木工程网</strong><span>www.civilcn.com</span></div>
</div>

<script>
  const NS = 'http://www.w3.org/2000/svg';

  function line(parent, x1, y1, x2, y2, color) {
    let el = document.createElementNS(NS, 'line');
    el.setAttribute('x1', x1);
    el.setAttribute('y1', y1);
    el.setAttribute('x2', x2);
    el.setAttribute('y2', y2);
    el.setAttribute('stroke', color);
    parent.appendChild(el);
  }

  // flat grids of the orthographic views
  document.querySelectorAll('.grid').forEach(function(g) {
    const step = 17.95;
    let left = +g.dataset.left, top = +g.dataset.top;
    let ax = +g.dataset.x, ay = +g.dataset.y;
    for (let k = -20; k <= 20; k++) {
      let x = Math.round(ax + k * step) + 0.5;
      let y = Math.round(ay + k * step) + 0.5;
      if (k !== 0) {
        line(g, x, top, x, top + 408, '#646464');
        if (Math.abs(k) < 12) line(g, left, y, left + 721, y, '#646464');
      }
    }
    line(g, left, ay + 0.5, left + 721, ay + 0.5, '#000');
    line(g, ax + 0.5, top, ax + 0.5, top + 408, '#000');
  });

  // home grid of the perspective view
  function project(u, v) {
    let a = (u - v) / 2, b = (u + v) / 2, w = 1 - 0.346 * b;
    return [1355.5 + 342 * a / w, 741 + 173 * b / w];
  }
  let pg = document.getElementById('perspGrid');
  for (let i = -7; i <= 7; i++) {
    let t = i / 7, c = i === 0 ? '#000' : '#5c5c5c';
    line(pg, ...project(t, -1), ...project(t, 1), c);
    line(pg, ...project(-1, t), ...project(1, t), c);
  }

  // frames 0-100
  let track = document.getElementById('track');
  for (let f = 0; f <= 100; f++) {
    let cell = document.createElement('div');
    cell.className = f % 5 === 0 ? 'frame major' : 'frame';
    if (f === 0) cell.className += ' current';
    if (f % 5 === 0) cell.innerHTML = '<span>' + f + '</span>';
    track.appendChild(cell);
  }
</script>

</body>
</html>
```
FILE: styles.css
```
* {
  box-sizing: border-box;
}

body {
  margin: 0;
  height: 100vh;
  display: flex;
  flex-direction: column;
  overflow: hidden;
  background-color: #444;
  color: #e4e4e4;
  font-family: "Noto Sans", "Noto Sans CJK SC", sans-serif;
  font-size: 12px;
  line-height: 16px;
}

button, input, select {
  font: inherit;
  color: inherit;
  margin: 0;
  padding: 0;
  border: none;
  background: none;
  border-radius: 0;
}

select {
  appearance: none;
}

a {
  color: inherit;
  text-decoration: none;
  white-space: nowrap;
}

svg {
  display: block;
  flex: none;
}

.sprite {
  position: absolute;
  width: 0;
  height: 0;
}

.caret {
  flex: none;
  width: 0;
  height: 0;
  border: 3px solid transparent;
  border-top: 4px solid #444;
  border-bottom: none;
}

/* title bar */
.titlebar {
  position: relative;
  display: flex;
  flex: none;
  height: 24px;
  background-color: #fff;
  color: #000;
}

.quickbar,
.infocenter {
  display: flex;
  align-items: center;
  flex: none;
  background: linear-gradient(#ababab, #858585);
  border-top: 1px solid #555;
}

.quickbar {
  width: 360px;
  padding-left: 46px;
}

.qbtn {
  display: flex;
  flex: none;
  width: 24px;
  justify-content: center;
}

.quickbar .qbtn svg,
.infocenter svg {
  width: 17px;
  height: 17px;
}

.quickbar .caret {
  margin: 0 3px;
}

.workspace {
  display: flex;
  align-items: center;
  flex: 1;
  height: 21px;
  background-color: #f2f2f2;
  border: 1px solid #555;
}

.workspace select {
  flex: 1;
  padding-left: 4px;
}

.quickbar .overflow {
  margin: 0 5px;
}

.titlebar h1 {
  flex: 1;
  display: flex;
  justify-content: center;
  align-items: center;
  gap: 24px;
  margin: 0;
  font-size: 12px;
  font-weight: normal;
}

.infocenter {
  width: 460px;
}

.expand {
  width: 14px;
  height: 23px;
  border: 1px solid #777;
}

.expand::before {
  content: "";
  display: block;
  width: 0;
  margin-left: 4px;
  border: 4px solid transparent;
  border-left-color: #333;
  border-right: none;
}

.help-search {
  width: 180px;
  height: 22px;
  padding-left: 3px;
  background-color: #fff;
  border: 1px solid #000;
}

.help-search::placeholder {
  color: #555;
  font-style: italic;
}

.login {
  display: flex;
  align-items: center;
  width: 118px;
  padding-left: 3px;
  gap: 5px;
}

.login .caret {
  margin-left: auto;
  margin-right: 3px;
}

.exch {
  width: 32px;
}

.help {
  width: 32px;
  margin-left: 3px;
}

.winbtns {
  display: flex;
  width: 163px;
  padding: 0 2px 0 24px;
}

.winbtns button {
  display: flex;
  flex: 1;
  align-items: center;
  justify-content: center;
}

.winbtns svg {
  width: 12px;
  height: 12px;
}

.appmenu {
  position: absolute;
  left: 0;
  top: 0;
  z-index: 2;
  width: 41px;
  height: 41px;
  border: 1px solid #111;
  background: linear-gradient(#d0d0d0, #8c8c8c 60%, #777);
}

.appmenu b {
  display: block;
  height: 28px;
  font: 900 31px/29px Roboto, sans-serif;
  color: #12969c;
}

.appmenu small {
  display: block;
  font-size: 8px;
  line-height: 10px;
  font-weight: 900;
  color: #000;
}

.appmenu .caret {
  position: absolute;
  right: 2px;
  top: 22px;
}

/* menu bar */
.menubar {
  display: flex;
  flex: none;
  height: 21px;
  gap: 22px;
  padding-left: 55px;
  align-items: center;
  background: linear-gradient(#a4a4a4, #575757);
  border-top: 1px solid #333;
  color: #fff;
}

.menus {
  display: flex;
  gap: 25px;
}

.tight {
  gap: 21px;
}

/* main toolbar */
.toolbar {
  display: flex;
  flex: none;
  height: 39px;
  border-bottom: 1px solid #222;
}

.tools {
  display: flex;
  align-items: center;
  padding-right: 3px;
  border-right: 1px solid #111;
}

.grip {
  flex: none;
  width: 4px;
  height: 30px;
  margin: 0 2px;
  border: 1px solid #1c1c1c;
  border-width: 0 1px;
}

.tools button {
  position: relative;
  display: flex;
  width: 32px;
  height: 30px;
  align-items: center;
  justify-content: center;
}

.tools button svg {
  width: 24px;
  height: 24px;
}

.tools button.on::before {
  content: "";
  position: absolute;
  inset: 0 1px;
  z-index: -1;
  border-radius: 3px;
  background-color: #5b88c4;
  border: 1px solid #3e6294;
}

.fly::after {
  content: "";
  position: absolute;
  right: 2px;
  bottom: 0;
  border: 2px solid #fff;
  border-top-color: transparent;
  border-left-color: transparent;
}

.sep {
  flex: none;
  width: 2px;
  height: 17px;
  margin: 0 2px;
  background-color: #1c1c1c;
}

.drop {
  position: relative;
  display: block;
  width: 68px;
  height: 20px;
  margin: 0 1px;
  background-color: #646464;
}

.tools .drop {
  margin-bottom: 10px;
}

.tools .wide {
  width: 118px;
}

.drop select {
  width: 100%;
  height: 100%;
  padding-left: 5px;
}

.wide select {
  padding-left: 3px;
}

.drop::after {
  content: "";
  position: absolute;
  right: 7px;
  top: 7px;
  border: 3px solid transparent;
  border-top: 5px solid #ddd;
  border-bottom: none;
}

.drop:not(.wide) select {
  font-size: 11px;
}

/* ribbon */
.ribbon {
  display: flex;
  flex: none;
  height: 40px;
}

.ribbon .grip {
  margin-top: 4px;
}

.ribbon-body {
  flex: 1;
}

.tabs {
  display: flex;
  align-items: center;
  height: 21px;
  padding: 1px 0 0 31px;
  background-color: #525252;
  border-top: 1px solid #666;
  border-bottom: 1px solid #2c2c2c;
  color: #b0b0b0;
}

.tabs .model {
  margin-right: 36px;
}

.tabs .select {
  margin: 0 52px;
}

.tabs button.active {
  width: 57px;
  height: 19px;
  margin-left: 28px;
  padding-left: 14px;
  background: linear-gradient(#707070, #5a5a5a);
  border: 1px solid #303030;
  color: #e8e8e8;
}

.ribbon-toggle {
  width: 13px;
  height: 8px;
  margin: 0 5px 0 24px;
  border-radius: 2px;
  background-color: #eee;
}

.ribbon-toggle::before {
  content: "";
  display: block;
  width: 0;
  margin: 2px auto 0;
  border: 3px solid transparent;
  border-top: 4px solid #333;
  border-bottom: none;
}

.tabs .caret {
  border-top-color: #bbb;
}

.panels {
  display: flex;
  height: 19px;
  padding-left: 4px;
  gap: 1px;
  background: linear-gradient(#464646, #3b3b3b);
}

.panels button {
  padding: 1px 4px 0;
  border: 1px solid #555;
  border-top: none;
  background-color: #454545;
  color: #eee;
}

/* work area */
.workspace-area {
  display: flex;
  flex: 1;
  min-height: 0;
  background-color: #454545;
}

.layout-strip {
  display: flex;
  flex-direction: column;
  flex: none;
  width: 40px;
  justify-content: flex-end;
  align-items: flex-end;
  background-color: #303030;
  border-top: 10px solid #444;
}

.play {
  width: 20px;
  height: 19px;
  margin: 0 10px 10px 0;
  border-radius: 3px;
  background-color: #545454;
}

.play::before {
  content: "";
  display: block;
  width: 0;
  margin: auto;
  border: 5px solid transparent;
  border-left: 6px solid #e8e8e8;
  border-right: none;
}

.layout {
  display: grid;
  grid-template-columns: 1fr 1fr;
  gap: 0;
  width: 36px;
  height: 44px;
  margin-bottom: 2px;
  padding: 8px 2px 8px 3px;
  border-radius: 3px 0 0 3px;
  background: linear-gradient(#4f74a8, #456fa8 80%, #3f86e4);
}

.layout i {
  background: linear-gradient(#5c6f8a, #66727e);
  border: 1px solid #2a3a52;
}

/* scene explorer */
.explorer {
  display: flex;
  flex-direction: column;
  flex: none;
  width: 229px;
  border: 1px solid #111;
  border-width: 0 1px 1px 1px;
}

.ex-menu {
  display: flex;
  gap: 20px;
  height: 33px;
  padding: 12px 0 0 16px;
  flex: none;
}

.ex-search {
  display: flex;
  align-items: center;
  flex: none;
  height: 24px;
  padding-left: 5px;
}

.ex-search input,
.ex-foot input {
  height: 23px;
  border: 1px solid #666;
}

.ex-search input {
  width: 150px;
}

.clear {
  width: 25px;
  padding-right: 3px;
  font-size: 14px;
  font-weight: bold;
  color: #aaa;
}

.find {
  display: flex;
  width: 24px;
  height: 24px;
  align-items: center;
  justify-content: center;
  background-color: #5b88c4;
}

.find svg {
  width: 18px;
  height: 18px;
}

.more {
  margin-left: 7px;
  padding-bottom: 12px;
  font-size: 14px;
  color: #5a5a90;
}

.ex-body {
  display: flex;
  flex: 1;
  min-height: 0;
  padding-top: 3px;
}

.ex-filters {
  display: flex;
  flex-direction: column;
  gap: 3px;
  width: 26px;
  padding: 3px 0 0 1px;
}

.ex-filters button {
  display: flex;
  width: 22px;
  height: 20px;
  align-items: center;
  justify-content: center;
}

.ex-filters .on {
  background-color: #5b88c4;
}

.ex-filters svg {
  width: 16px;
  height: 16px;
}

.ex-filters hr {
  width: 18px;
  height: 1px;
  margin: 1px 2px 0;
  border: none;
  background-color: #888;
}

.ex-list {
  width: 197px;
  margin-bottom: 5px;
  border: 1px solid #555;
}

.ex-head {
  display: flex;
  align-items: center;
  justify-content: space-between;
  height: 20px;
  padding: 0 2px;
  border-bottom: 1px solid #555;
  color: #fff;
}

.ex-head i {
  border: 4px solid transparent;
  border-bottom: 6px solid #fff;
  border-top: none;
}

.ex-row {
  display: flex;
  align-items: center;
  height: 19px;
  padding-left: 18px;
}

.ex-row .eye {
  width: 14px;
  height: 10px;
}

.dot {
  width: 10px;
  height: 10px;
  margin: 0 5px 0 3px;
  border-radius: 50%;
  background-color: #d4d4d4;
}

.ex-row span {
  flex: 1;
  height: 18px;
  padding-left: 3px;
  background-color: #808080;
}

.ex-foot {
  display: flex;
  align-items: center;
  flex: none;
  height: 32px;
  padding: 0 0 0 5px;
}

.ex-foot input {
  width: 146px;
  padding-left: 2px;
  color: #f0f020;
}

.ex-foot .caret {
  margin: 0 6px 0 4px;
  border-top-color: #111;
}

.line {
  width: 1px;
  height: 25px;
  margin-right: 8px;
  background-color: #777;
}

.layers {
  width: 14px;
  height: 15px;
}

.ex-foot .more {
  margin-left: 21px;
}

/* viewports */
.center {
  display: flex;
  flex-direction: column;
  flex: 1;
  min-width: 0;
}

.viewports {
  display: grid;
  grid-template-columns: 1fr 1fr;
  grid-template-rows: 1fr 1fr;
  gap: 4px;
  flex: 1;
  min-height: 0;
  padding: 1px 0 0 1px;
}

.viewport {
  position: relative;
  min-width: 0;
  min-height: 0;
  overflow: hidden;
  background-color: #363636;
}

.viewport > svg {
  width: 100%;
  height: 100%;
}

.viewport::after {
  content: "";
  position: absolute;
  inset: 0;
  border: 2px solid #383838;
}

.viewport.active::after {
  border-color: #776c34;
}

.vp-label {
  position: absolute;
  left: 6px;
  top: 8px;
  display: flex;
  gap: 7px;
  white-space: nowrap;
  color: #dcdcdc;
  font-size: 11px;
  font-family: "Noto Sans CJK SC", sans-serif;
}

.grid {
  shape-rendering: crispEdges;
}

.wire {
  fill: none;
  stroke: #82e6e6;
  stroke-width: 2;
}

.red, .darkred, .green, .blue, .gray, .white {
  fill: none;
  stroke: #b02c2c;
}

.darkred {
  stroke: #961818;
}

.green {
  stroke: #18a018;
}

.blue {
  stroke: #1818a8;
}

.gray {
  stroke: #777;
}

.white {
  stroke: #fff;
}

.axis text {
  font-size: 11px;
}

.axis .r { fill: #c03030; }
.axis .g { fill: #18a018; }
.axis .b { fill: #2222c0; }
.axis .k { fill: #909090; }
.axis .d { fill: #333; }
.axis .f { fill: #6a5050; }

.ring {
  fill: none;
  stroke: #8c9298;
  stroke-width: 6;
}

.compass text {
  font-size: 10px;
  fill: #b4b8bc;
}

.compass .face {
  font-size: 14px;
  fill: #6c6c6c;
}

/* time controls */
.timeslider {
  display: flex;
  flex: none;
  height: 18px;
  gap: 2px;
  padding: 1px 0 1px 2px;
}

.timeslider button {
  width: 14px;
  border-radius: 2px;
  background-color: #5c5c5c;
  line-height: 14px;
}

.timeslider .thumb {
  width: 123px;
  background-color: #656565;
}

.trackbar {
  display: flex;
  flex: none;
  height: 27px;
  border-top: 2px solid #181818;
}

.mini-curve {
  display: flex;
  width: 50px;
  padding: 4px 0 0 14px;
}

.mini-curve svg {
  width: 16px;
  height: 16px;
}

.track {
  display: flex;
  flex: 1;
  padding-right: 51px;
  background-color: #2b2b2b;
}

.frame {
  display: flex;
  flex: 1 1 0;
  min-width: 0;
  justify-content: center;
  align-items: flex-end;
  background: linear-gradient(#777, #777) center top / 1px 12px no-repeat;
}

.frame.major {
  background-size: 1px 24px;
}

.frame.current {
  background: linear-gradient(#8f8426, #8f8426) center top / 8px 100% no-repeat;
}

.frame span {
  height: 14px;
  font-size: 11px;
  line-height: 14px;
  color: #ccc;
}

/* command panel */
.command {
  display: flex;
  flex-direction: column;
  flex: none;
  width: 204px;
  padding-left: 4px;
  border-left: 5px solid #3b3b3b;
}

.cmd-tabs {
  display: flex;
  flex: none;
  gap: 2px;
  height: 28px;
  margin-left: -4px;
}

.cmd-tabs button {
  display: flex;
  width: 30px;
  align-items: center;
  justify-content: center;
  background-color: #383838;
}

.cmd-tabs button.active {
  background-color: #444;
}

.cmd-tabs svg {
  width: 18px;
  height: 18px;
}

.cmd-cats {
  display: flex;
  flex: none;
  height: 22px;
  gap: 2px;
  margin: 5px 0 7px 1px;
}

.cmd-cats button {
  display: flex;
  width: 22px;
  align-items: center;
  justify-content: center;
}

.cmd-cats svg {
  width: 16px;
  height: 16px;
}

.cmd-cats .on {
  border-radius: 3px;
  background-color: #5b88c4;
}

.command .cmd-drop {
  width: 190px;
  flex: none;
  margin: 0 0 6px;
}

.rollouts {
  display: flex;
  flex-direction: column;
  gap: 4px;
  width: 183px;
  font-size: 11px;
  font-family: "Liberation Sans", "Noto Sans CJK SC", sans-serif;
}

.rollout {
  padding-bottom: 6px;
  background-color: #535353;
  border-radius: 2px;
}

.rollout h2 {
  display: flex;
  align-items: center;
  height: 18px;
  margin: 0;
  padding: 0 8px 0 6px;
  font-size: 12px;
  font-weight: bold;
  color: #fff;
}

.rollout h2::before {
  content: "";
  margin-right: 7px;
  border: 3px solid transparent;
  border-top: 5px solid #ccc;
  border-bottom: none;
}

.rollout h2::after {
  content: "";
  width: 7px;
  height: 5px;
  margin-left: auto;
  background: radial-gradient(circle, #999 1px, transparent 1px) 0 0 / 3px 3px;
}

.closed {
  padding: 0;
}

.closed h2::before {
  margin-right: 9px;
  border: 3px solid transparent;
  border-left: 4px solid #ccc;
  border-right: none;
}

.rollout input[type="checkbox"],
.rollout input[type="radio"] {
  appearance: none;
  width: 10px;
  height: 10px;
  background-color: #666;
}

.rollout input[type="radio"] {
  border-radius: 50%;
}

.rollout input[type="radio"]:checked {
  background-color: #eee;
  border: 2px solid #777;
}

.rollout input[type="checkbox"]:checked::before {
  content: "";
  display: block;
  width: 4px;
  height: 7px;
  margin-left: 3px;
  border: 2px solid #e8e8e8;
  border-width: 0 2px 2px 0;
  transform: rotate(40deg);
}

.autogrid {
  display: flex;
  align-items: center;
  gap: 4px;
  height: 21px;
  padding-left: 44px;
}

.types {
  display: grid;
  grid-template-columns: 78px 78px;
  gap: 4px 5px;
  padding-left: 11px;
}

.types button {
  height: 17px;
  border-radius: 3px;
  background-color: #666;
  line-height: 16px;
}

.types .on {
  background-color: #5b88c4;
}

.namecolor {
  display: flex;
  gap: 4px;
  padding: 9px 0 4px 17px;
}

.namecolor input {
  width: 130px;
  height: 18px;
  padding-left: 3px;
  background-color: #646464;
}

.swatch {
  width: 16px;
  height: 18px;
  background-color: #ccccf6;
  border: 1px solid #111;
}

.methods {
  display: flex;
  align-items: center;
  height: 23px;
  padding-left: 35px;
}

.methods label {
  margin: 0 17px 0 8px;
}

.field {
  display: flex;
  align-items: center;
  height: 21px;
}

.rollout h2 + .field {
  margin-top: 6px;
}

.field.first {
  margin-top: 7px;
}

.field label {
  width: 85px;
  margin-right: 6px;
  text-align: right;
}

.spin {
  position: relative;
  width: 68px;
  height: 16px;
  background-color: #646464;
}

.spin input {
  width: 54px;
  height: 16px;
  padding-left: 3px;
}

.spin::before,
.spin::after {
  content: "";
  position: absolute;
  right: 3px;
  top: 3px;
  border: 3px solid transparent;
  border-bottom: 4px solid #ddd;
  border-top: none;
}

.spin::after {
  top: 9px;
  border: 3px solid transparent;
  border-top: 4px solid #ddd;
  border-bottom: none;
}

.check {
  display: flex;
  align-items: center;
  gap: 3px;
  height: 22px;
  padding-left: 20px;
}

.params {
  padding-bottom: 3px;
}

.field + .check {
  margin-top: 4px;
}

/* status bar */
.status {
  display: flex;
  flex: none;
  height: 50px;
  background-color: #444;
  font-size: 11px;
}

.listener {
  display: flex;
  flex-direction: column;
  gap: 1px;
  width: 105px;
  padding: 2px 5px 2px 1px;
  border-right: 1px solid #111;
}

.listener div {
  height: 22px;
  border: 2px solid #fff;
  border-top-color: #777;
  border-left-color: #777;
}

.macro {
  background-color: #dcc0c0;
}

.script {
  padding-left: 4px;
  overflow: hidden;
  white-space: nowrap;
  background-color: #fff;
  color: #000;
  font: 12px/18px "Liberation Serif", "Noto Sans CJK SC", serif;
}

.prompt {
  width: 919px;
  padding: 7px 0 0 5px;
}

.prompt p {
  margin: 0 0 9px;
}

.coord-row,
.tag-row {
  display: flex;
  align-items: center;
}

.coord-row {
  height: 28px;
}

.coords button {
  display: flex;
  width: 21px;
  height: 19px;
  align-items: center;
  justify-content: center;
}

.coord-row button {
  width: 27px;
}

.coords svg {
  width: 15px;
  height: 15px;
}

.coord-row input {
  width: 57px;
  height: 18px;
  margin-right: 13px;
  padding-left: 2px;
  background-color: #5c5c5c;
  color: #888;
}

.coord-row label {
  width: 14px;
}

.coord-row button + label {
  width: 16px;
  padding-left: 2px;
}

.coord-row span {
  margin-left: 2px;
  white-space: nowrap;
}

.tag-row {
  gap: 5px;
  padding-left: 309px;
}

.tag-row .on {
  background-color: #5b88c4;
  border-radius: 2px;
}

/* taskbar */
.taskbar {
  display: flex;
  flex: none;
  height: 42px;
  background: linear-gradient(90deg, #1c2523, #2e3323 390px, #38371f 700px, #33361f);
}

.taskbar button {
  position: relative;
  display: flex;
  width: 49px;
  align-items: center;
  justify-content: center;
}

.taskbar button svg {
  width: 24px;
  height: 24px;
}

.taskbar .start {
  width: 48px;
}

.taskbar .start svg {
  width: 16px;
  height: 16px;
}

.task-search {
  display: flex;
  align-items: center;
  gap: 12px;
  width: 344px;
  padding-left: 11px;
  background-color: #f2f2f2;
}

.task-search svg {
  width: 17px;
  height: 17px;
}

.task-search input {
  flex: 1;
  font-size: 14px;
}

.task-search input::placeholder {
  color: #333;
}

.open::after {
  content: "";
  position: absolute;
  left: 4px;
  right: 4px;
  bottom: 0;
  height: 2px;
  background-color: #76b9ed;
}

.multi::after {
  background: linear-gradient(90deg, #76b9ed 80%, #889 80%);
}

.taskbar .current {
  background-color: #5c5c48;
}

.current::after {
  left: 0;
  right: 0;
}

.max-icon {
  width: 24px;
  height: 24px;
  background-color: #e4eef0;
  color: #12857f;
}

.max-icon b {
  display: block;
  font: 900 21px/19px Roboto, sans-serif;
}

.max-icon small {
  display: block;
  font-size: 6px;
  line-height: 4px;
  font-weight: bold;
  text-align: right;
}

/* site mark */
.sitemark {
  position: fixed;
  right: 0;
  bottom: 0;
  z-index: 5;
  display: flex;
  align-items: flex-start;
  width: 475px;
  height: 238px;
  padding: 64px 0 0 43px;
  background-color: #fff;
  color: #111;
}

.mark {
  width: 126px;
  height: 106px;
}

.mark-text {
  display: flex;
  flex-direction: column;
  padding-top: 17px;
}

.mark-text strong {
  font: italic 900 52px/48px "Noto Sans CJK SC", sans-serif;
}

.mark-text span {
  font: italic 600 34px/32px "Open Sans", sans-serif;
}
```
